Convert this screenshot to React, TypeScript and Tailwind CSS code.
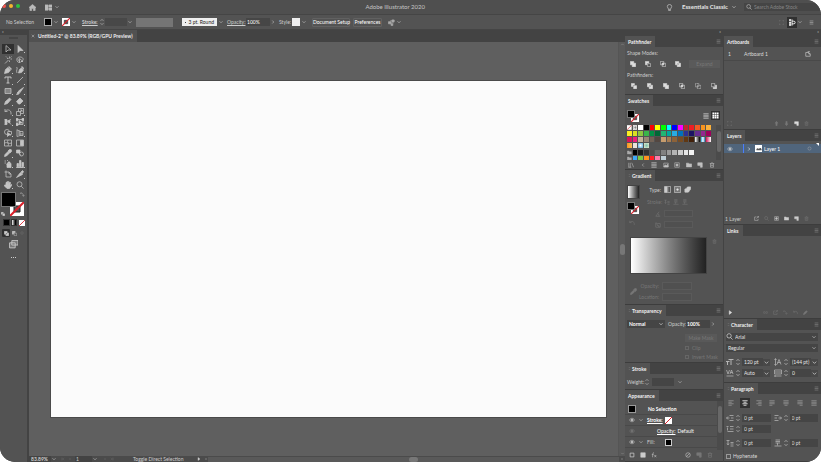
import React from 'react';
import clsx from 'clsx';

const ICONS: Record<string, React.ReactNode> = {
  home: <path fill="currentColor" d="M8 1 0 8h2v7h4v-5h4v5h4V8h2z" />,
  layout: <path fill="currentColor" d="M0 2h7v12H0zM9 2h7v5H9zM9 9h7v5H9z" />,
  down: <path d="m4 6 4 4 4-4" />,
  upchev: <path d="m4 10 4-4 4 4" />,
  right: <path d="m6 4 4 4-4 4" />,
  left: <path d="m10 4-4 4 4 4" />,
  spin: <path d="m4 5 4-4 4 4M4 11l4 4 4-4" />,
  menu: <path d="M2 3h12M2 8h12M2 13h12" />,
  bulb: <path d="M6 12v3h4v-3M6 12C6 10 3 9 3 6a5 5 0 0 1 10 0c0 3-3 4-3 6z" />,
  search: <path d="M10.5 10.500 15 15M12 6.500a5 5 0 1 1-10 0 5 5 0 0 1 10 0z" />,
  close: <path d="m3 3 10 10M13 3 3 13" />,
  select: <path d="M4 1v13l4-4h6z" />,
  direct: <path fill="currentColor" d="M4 1v14l4-4h6z" />,
  wand: <path d="m2 15 7-7M11 1v4M11 9v3M6 5h3M13 6h3M4 1l2 2M13 3l2-2" />,
  lasso: <path d="M6 13C2 12 1 8 2 5c2-4 10-4 12 0 1 3-1 6-4 6M7 5v9l3-3h4zM4 5c0 4 2 5 4 6" />,
  pen: <path fill="currentColor" d="m1 15 2-8 5-4 5 5-4 5zM10 1l5 5-1 1-5-5z" />,
  curve: <><path fill="currentColor" d="m5 14 2-7 4-3 4 4-4 5zM12 1l4 4-1 1-4-4z" /><path d="M1 2c4 2-2 7 1 12" /></>,
  type: <path strokeWidth="2" d="M2 5V2h12v3M8 2v12M5 14h6" />,
  line: <path d="M2 14 14 2" />,
  rect: <path fill="#858585" d="M2 3h12v10H2z" />,
  brush: <path fill="currentColor" d="M15 1 8 11 5 8zM5 9l2 3c-1 3-4 3-6 3 2-1 1-5 4-6z" />,
  pencil: <path fill="currentColor" d="m1 15 2-6 8-7 3 3-7 8z" />,
  eraser: <path fill="currentColor" d="m1 9 7-7 6 6-6 6H5z" />,
  rotate: <path d="M2 2v5h5M2 7c3-5 12-4 12 3v3" />,
  scale: <path d="M1 7h8v8H1zM5 7V1h10v10H9M7 9l5-5M8 4h4v4" />,
  width: <><path d="M1 13C5 12 5 5 14 3M1 3c5 1 8 4 13 10" /><path fill="currentColor" d="M2 3h4v10H2zM9 5h3v4H9z" /></>,
  transform: <><path d="M2 3h12v10H2z" /><path fill="currentColor" d="M0 1h4v4H0zM12 1h4v4h-4zM0 11h4v4H0zM6 5v8l3-3h4z" /></>,
  shape: <><path d="M11 6a5 5 0 1 0-5 5M7 5h8v6" /><path fill="currentColor" d="M7 7v8l3-3h4z" /></>,
  persp: <path d="M2 1v14M2 2l6 2v9l-6 2M8 5h6v8H8M4 6h4M4 10h10" />,
  mesh: <path d="M1 2h14v12H1zM1 8c5-3 9 3 14 0M8 2c-3 5 3 7 0 12" />,
  grad: <><path d="M1 2h14v12H1z" /><path fill="currentColor" d="M9 3h5v10H9z" /></>,
  dropper: <path fill="currentColor" d="m1 15 1-4 6-6 3 3-6 6zM8 4l3-3c3-1 5 1 4 4l-3 3z" />,
  blend: <><path fill="currentColor" d="M1 2h7v6H1z" /><circle cx="11" cy="10" r="4" /><path d="m4 6 6 7" /></>,
  spray: <><path fill="currentColor" d="M6 7h8v8H6zM8 4h4v2H8z" /><path d="M1 2h3M1 6h3M6 1h2M4 9h1" /></>,
  graph: <path fill="currentColor" d="M1 14h14v1H1zM2 7h3v6H2zM7 1h3v12H7zM12 5h3v8h-3z" />,
  artboard: <path d="M4 1v3M1 4h9l4 4v6H4V4M10 4v4h4" />,
  slice: <path fill="currentColor" d="m1 15 8-10 4 4zM10 4l3-3 2 2-2 4z" />,
  hand: <path fill="currentColor" d="M4 8V3l2-1 1 5V1h2v6l2-5 2 1-1 6 3-2 1 1-5 7H6L0 9l1-1z" />,
  swap: <path d="M3 6 1 4l3-3M2 4c6-1 9 3 9 8M8 10l3 4 3-4" />,
  expand: <path d="M5 1H1v4M11 1h4v4M1 11v4h4M15 11v4h-4" />,
  screen: <path fill="#777" d="M5 1h11v8H5zM1 5h10v9H1z" />,
  unite: <path fill="currentColor" d="M1 1h9v5h5v9H6v-5H1z" />,
  minus: <><path fill="currentColor" d="M1 1h9v4H5v5H1z" /><path d="M7 7h8v8H7z" /></>,
  intersect: <><path d="M1 1h9v9H1zM6 6h9v9H6z" /><path fill="currentColor" d="M6 6h4v4H6z" /></>,
  exclude: <path fill="currentColor" fillRule="evenodd" d="M1 1h9v9H1zM6 6h9v9H6z" />,
  divide: <path fill="currentColor" d="M1 1h8v4H5v4H1zM7 7h8v8H7z" />,
  outline: <path strokeDasharray="3 1" d="M1 1h9v9H1zM6 6h9v9H6z" />,
  minusback: <><path d="M1 1h9v9H1z" /><path fill="currentColor" d="M12 6h3v9H6v-3h6z" /></>,
  folder: <path fill="currentColor" d="M1 3h6l1 2h7v8H1z" />,
  page: <path fill="currentColor" d="M2 2h12v12H9V9H2z" />,
  trash: <path d="M2 4h12M4 4v10h8V4M6 2h4M7 7v4M9 7v4" />,
  file: <path d="M2 4h8l4 4v6H2zM10 4v4h4M7 1h6" />,
  share: <path d="M8 3H2v11h11V9M8 8l6-6M10 1h5v5" />,
  library: <path d="M2 2v12M6 2v12M10 2l5 12M1 14h8" />,
  mask: <><path d="M2 2h12v12H2z" /><circle cx="8" cy="8" r="3" fill="currentColor" /></>,
  image: <><path d="M2 3h12v10H2z" /><path fill="currentColor" d="m2 13 4-6 3 3 3-4 2 7z" /></>,
  layer: <path fill="currentColor" stroke="none" d="M1 9c3-6 5 0 7-2s5-3 7 2v2H1z" />,
  eye: <><path d="M1 8c4-6 10-6 14 0-4 6-10 6-14 0z" /><circle cx="8" cy="8" r="2.500" fill="currentColor" /></>,
  up: <path fill="currentColor" d="M8 1 3 7h3v8h4V7h3z" />,
  dn: <path fill="currentColor" d="M8 15 3 9h3V1h4v8h3z" />,
  angle: <path d="M14 14H2L11 2M7 7c3 1 4 4 3 7" />,
  aspect: <path d="M2 2v12h12V4H6zM6 8l6 6M3 4l8 8" />,
  fontsize: <path strokeWidth="2" d="M5 3h10M10 3v11M0 7h7M3 7v7" />,
  leading: <path d="m6 13 4-10 4 10M7 9h6M3 2v12M1 4l2-3 2 3M1 12l2 3 2-3" />,
  kerning: <path d="m1 2 3 8 3-8M8 10l3-8 3 8M9 7h4M1 14h14" />,
  tracking: <path d="M1 2h14v8H1zM4 4v4M8 4v4M12 4v4M1 14h14M3 12l-2 2 2 2" />,
  alignleft: <path strokeWidth="2" d="M1 2h14M1 6h9M1 10h14M1 14h9" />,
  aligncenter: <path strokeWidth="2" d="M1 2h14M4 6h8M1 10h14M4 14h8" />,
  alignright: <path strokeWidth="2" d="M1 2h14M6 6h9M1 10h14M6 14h9" />,
  justify: <path strokeWidth="2" d="M1 2h14M1 6h14M1 10h14M1 14h8" />,
  justifycenter: <path strokeWidth="2" d="M1 2h14M1 6h14M1 10h14M4 14h8" />,
  justifyright: <path strokeWidth="2" d="M1 2h14M1 6h14M1 10h14M7 14h8" />,
  justifyall: <path strokeWidth="2" d="M1 2h14M1 6h14M1 10h14M1 14h14" />,
  indentleft: <path d="M15 3H7M15 8h-5M15 13H7M7 8H1M4 5 1 8l3 3" />,
  indentright: <path d="M1 3h8M1 8h5M1 13h8M9 8h6M12 5l3 3-3 3" />,
  indentfirst: <path d="M1 3h4M8 3h7M8 8h7M3 13h12M3 5v6" />,
  before: <path d="M1 3h6M4 3v8M2 9l2 3 2-3M9 7h6M9 10h6M9 14h6" />,
  after: <path d="M3 2h9M3 5h9M3 8h9M1 14h14M7 8v5" />,
  square: <path strokeWidth="2" d="M3 3h10v10H3z" />,
  squarefill: <path fill="currentColor" d="M2 2h12v12H2z" />,
  fx: <path d="M8 2C4 1 5 6 4 14M2 7h5M9 8l5 6M14 8l-5 6" />,
  ban: <><circle cx="8" cy="8" r="6" /><path d="m4 12 8-8" /></>,
  circle: <circle cx="8" cy="8" r="5" />,
  play: <path fill="currentColor" d="M4 2v12l8-6z" />,
  first: <path d="M4 2v12M12 3 7 8l5 5" />,
  last: <path d="M12 2v12M4 3l5 5-5 5" />,
  link: <path d="M7 5H4a3 3 0 0 0 0 6h3M9 5h3a3 3 0 0 1 0 6H9M5 8h6" />,
  recolor: <><path d="M5 4h10M5 9h8" /><path fill="currentColor" d="M1 6h6v5H1zM9 2h5v5H9zM7 11h4v4H7z" /></>,
  arrange: <><path fill="currentColor" d="M1 1h3v3H1zM1 7h3v3H1zM1 12h3v3H1z" /><path strokeWidth="2" d="M7 1v14M7 5h4a3 3 0 0 1 0 6H7" /></>,
  list: <path strokeWidth="2" d="M1 2h14M1 6h14M1 10h14M1 14h14" />,
  grid: <path fill="currentColor" stroke="none" d="M1 1h4v4H1zM6 1h4v4H6zM11 1h4v4h-4zM1 6h4v4H1zM6 6h4v4H6zM11 6h4v4h-4zM1 11h4v4H1zM6 11h4v4H6zM11 11h4v4h-4z" />,
  gradlinear: <><path d="M1 1h14v14H1z" /><path fill="#ccc" d="M2 2h5v12H2z" /><path fill="#999" stroke="none" d="M7 2h3v12H7z" /></>,
  gradradial: <><path d="M1 1h14v14H1z" fill="#777" /><circle cx="8" cy="8" r="2" fill="#eee" /></>,
  gradfree: <path fill="currentColor" d="M2 7c5 0 4-5 7-5h6v6c-3 0-2 6-6 6H2z" />,
};

const Icon = ({ name, className = 'size-[7px]' }: { name: string; className?: string }) => (
  <svg viewBox="0 0 16 16" fill="none" stroke="currentColor" strokeWidth="1.5" className={clsx('shrink-0', className)} aria-hidden="true">
    {ICONS[name]}
  </svg>
);

interface IconButtonProps {
  name: string;
  label?: string;
  className?: string;
  icon?: string;
}

const IconButton: React.FC<IconButtonProps> = ({ name, label, className, icon }) => (
  <button type="button" aria-label={label ?? name} className={clsx('flex shrink-0 items-center justify-center', className)}>
    <Icon name={name} className={icon} />
  </button>
);

// White square with the red diagonal of an empty stroke
const NoneSwatch = ({ className, hollow }: { className?: string; hollow?: boolean }) => (
  <svg viewBox="0 0 14 14" className={clsx('shrink-0', className)} aria-hidden="true">
    <path fill="#fff" d="M0 0h14v14H0z" />
    {hollow && <path fill="#535353" stroke="#222" d="M4 4h6v6H4z" />}
    <path stroke="#d9202b" strokeWidth="2" d="M0 14 14 0" />
  </svg>
);

interface PanelProps {
  title: string;
  fold?: boolean;
  className?: string;
  children?: React.ReactNode;
}

const Panel: React.FC<PanelProps> = ({ title, fold, className, children }) => (
  <section className={clsx('flex shrink-0 flex-col border-b border-[#3d3d3d] bg-[#535353]', className)}>
    <header className="flex h-[11px] shrink-0 items-stretch justify-between bg-[#434343]">
      <h2 className="flex items-center gap-px bg-[#535353] pr-1 pl-[3px] font-bold text-[#f0f0f0]">
        {fold && <Icon name="spin" className="size-[3px] text-[#999]" />}
        {title}
      </h2>
      <IconButton name="menu" label={`${title} menu`} icon="size-[5px]" className="w-[9px] text-[#999]" />
    </header>
    {children}
  </section>
);

interface FieldProps {
  label: string;
  value?: string;
  icon?: string;
  drop?: boolean;
  className?: string;
}

const Field: React.FC<FieldProps> = ({ label, value = '', icon, drop, className }) => (
  <label className={clsx('flex h-[8px] items-center', className)}>
    {icon && <Icon name={icon} className="size-[8px] text-[#b5b5b5]" />}
    <Icon name="spin" className="mx-px size-[6px]" />
    <input aria-label={label} defaultValue={value} className="h-[8px] w-0 min-w-0 flex-1 bg-[#454545] pl-[2px]" />
    {drop && <Icon name="down" className="size-[7px] bg-[#484848]" />}
  </label>
);

const Select = ({ label, value, className }: { label: string; value: string; className?: string }) => (
  <div className={clsx('relative flex h-[8px] items-center bg-[#454545]', className)}>
    <select aria-label={label} defaultValue={value} className="h-full w-full appearance-none bg-transparent pr-2 pl-[2px]">
      <option>{value}</option>
    </select>
    <Icon name="down" className="pointer-events-none absolute right-px size-[6px]" />
  </div>
);

const TOOLS = [
  'select', 'direct', 'wand', 'lasso', 'pen', 'curve', 'type', 'line', 'rect', 'brush', 'pencil', 'eraser', 'rotate', 'scale',
  'width', 'transform', 'shape', 'persp', 'mesh', 'grad', 'dropper', 'blend', 'spray', 'graph', 'artboard', 'slice', 'hand', 'search',
];
const NO_FLYOUT = ['select', 'wand', 'lasso', 'mesh', 'grad', 'blend', 'artboard', 'search'];

const SWATCHES = [
  '#ffffff', '#000000', '#ff0000', '#ffff00', '#00ff00', '#00ffff', '#0000ff', '#ff00ff', '#c1272d', '#ed1c24', '#f15a24', '#f7931e', '#fbb03b',
  '#fcee21', '#d9e021', '#8cc63f', '#39b54a', '#009245', '#006837', '#22b573', '#00a99d', '#29abe2', '#0071bc', '#2e3192', '#1b1464', '#662d91', '#93278f', '#9e005d',
  '#d4145a', '#ed1e79', '#c7b299', '#998675', '#736357', '#534741', '#c69c6d', '#a67c52', '#8c6239', '#754c24', '#603813', '#42210b',
  'linear-gradient(90deg,#fff,#000)', 'linear-gradient(90deg,#29abe2,#fff,#1b6db5)', 'linear-gradient(90deg,#d4145a,#fff)',
  'linear-gradient(90deg,#f7931e,#fbc05b)', '#e9e4da', 'radial-gradient(#fff,#4aa3d8)', 'radial-gradient(#7fc0b0,#e8eccc)',
];
const GREYS = ['#000', '#1a1a1a', '#333', '#4d4d4d', '#666', '#808080', '#999', '#b3b3b3', '#ccc', '#e6e6e6', '#f2f2f2'];
const BRIGHTS = ['#3fa9f5', '#7ac943', '#ff931e', '#ff1d25', '#ff7bac', '#bdccd4'];

const SwatchRow = ({ colors }: { colors: string[] }) => (
  <div className="grid grid-cols-15 gap-px">
    <Icon name="folder" className="h-[5px] w-full text-[#aaa]" />
    {colors.map((c) => (
      <button key={c} type="button" aria-label={c} className="h-[5px]" style={{ background: c }} />
    ))}
  </div>
);

const TitleBar = () => (
  <header className="grid h-[15px] shrink-0 grid-cols-[12fr_auto_13fr] items-center border-b border-[#454545] bg-[#4f4f4f]">
    <div className="flex items-center">
      <div className="flex gap-[3px] pb-[3px] pl-[2px]">
        <i className="size-[4px] rounded-full bg-[#f4544d]" />
        <i className="size-[4px] rounded-full bg-[#f5b52e]" />
        <i className="size-[4px] rounded-full bg-[#2cc23e]" />
      </div>
      <IconButton name="home" label="Home" className="ml-[9px] text-[#bbb]" />
      <IconButton name="layout" label="Arrange documents" className="ml-[9px] text-[#bbb]" />
      <Icon name="down" className="ml-[2px] size-[6px]" />
    </div>
    <h1 className="text-[6px] leading-[8px] text-[#c5c5c5]">Adobe Illustrator 2020</h1>
    <div className="flex items-center justify-end">
      <IconButton name="bulb" label="Learn" />
      <button type="button" className="ml-[9px] flex items-center gap-[3px] text-[6px] leading-[8px] font-bold text-[#e5e5e5]">
        Essentials Classic
        <Icon name="down" className="size-[6px]" />
      </button>
      <label className="ml-[7px] flex h-[8px] w-[77px] items-center gap-[2px] bg-[#454545] px-[2px]">
        <Icon name="search" className="size-[6px]" />
        <input aria-label="Search Adobe Stock" placeholder="Search Adobe Stock" className="w-0 flex-1 placeholder:text-[#858585]" />
      </label>
    </div>
  </header>
);

const ControlBar = () => (
  <div className="flex h-[15px] shrink-0 items-center border-b border-[#454545] bg-[#535353]">
    <span className="w-[44px] pl-[6px]">No Selection</span>
    <button type="button" aria-label="Fill" className="size-[8px] border border-[#aaa] bg-black" />
    <Icon name="down" className="ml-px size-[6px]" />
    <NoneSwatch hollow className="ml-[3px] size-[8px]" />
    <Icon name="down" className="ml-px size-[6px]" />
    <label htmlFor="stroke-weight" className="ml-[5px] w-[17px] font-bold underline">Stroke:</label>
    <Icon name="spin" className="size-[6px]" />
    <input id="stroke-weight" className="h-[8px] w-[22px] bg-[#484848]" />
    <Icon name="down" className="size-[6px]" />
    <span className="ml-[3px] h-[9px] w-[37px] bg-[#757575]" />
    <button type="button" className="ml-[9px] flex h-[8px] w-[35px] items-center justify-between bg-[#eee] px-[3px] text-[#222]">
      <i className="size-px rounded-full bg-black" />
      3 pt. Round
    </button>
    <Icon name="down" className="ml-px size-[6px]" />
    <label htmlFor="opacity" className="ml-[3px] w-[19px] underline">Opacity:</label>
    <input id="opacity" defaultValue="100%" className="h-[8px] w-[24px] bg-[#464646] px-px text-white" />
    <Icon name="right" className="size-[6px]" />
    <span className="ml-[3px] w-[13px]">Style:</span>
    <button type="button" aria-label="Graphic style" className="size-[8px] bg-[#eee]" />
    <Icon name="down" className="ml-px size-[6px]" />
    <button type="button" className="ml-[5px] h-[9px] w-[38px] rounded-[1px] border border-[#616161] text-white">Document Setup</button>
    <button type="button" className="ml-[3px] h-[9px] w-[29px] rounded-[1px] border border-[#616161] text-white">Preferences</button>
    <IconButton name="recolor" label="Recolor" className="ml-[6px] text-[#aaa]" />
    <Icon name="down" className="ml-px size-[6px]" />
    <div className="ml-auto flex items-center pr-[7px]">
      <Icon name="expand" className="size-[5px] text-[#777]" />
      <IconButton name="arrange" label="Align" className="ml-[3px] h-[11px] w-[10px] bg-[#303030] text-white" />
      <Icon name="down" className="mr-[6px] size-[6px]" />
      <IconButton name="menu" label="Options" icon="size-[5px]" />
    </div>
  </div>
);

const Toolbar = () => (
  <aside className="flex w-[29px] shrink-0 flex-col border-r-2 border-[#434343] bg-[#535353]">
    <div className="h-[5px] bg-[#434343] pl-[2px] text-[4px] leading-[4px]">«</div>
    <div className="mx-auto mt-[2px] mb-[5px] h-[2px] w-[9px] border-y border-[#454545]" />
    <div className="ml-[2px] grid h-[146px] w-[24px] shrink-0 grid-cols-2">
      {TOOLS.map((t, i) => (
        <button key={t} type="button" aria-label={t} className={clsx('relative flex items-center justify-center text-[#c4c4c4]', i === 0 && 'bg-[#303030]')}>
          <Icon name={t} className="size-[8px]" />
          {!NO_FLYOUT.includes(t) && <i className="absolute right-px bottom-px size-px bg-[#c4c4c4]" />}
        </button>
      ))}
    </div>
    <div className="relative mt-[2px] ml-px h-[25px] w-[25px] shrink-0">
      <NoneSwatch hollow className="absolute right-[2px] bottom-px size-[14px]" />
      <button type="button" aria-label="Fill colour" className="absolute top-0 left-0 size-[15px] border border-[#777] bg-black" />
      <IconButton name="swap" label="Swap fill and stroke" icon="size-[5px]" className="absolute top-0 right-px" />
      <Icon name="divide" className="absolute bottom-px left-0 size-[4px]" />
    </div>
    <div className="mt-[2px] ml-[2px] grid w-[24px] grid-cols-3 place-items-center">
      <i className="size-[7px] border border-[#333] bg-black" />
      <i className="h-[7px] w-[6px] border border-[#333] bg-linear-to-r from-white to-black" />
      <NoneSwatch className="size-[6px]" />
    </div>
    <div className="mt-[3px] ml-[2px] grid w-[24px] grid-cols-3 place-items-center">
      <IconButton name="exclude" label="Draw normal" icon="size-[5px]" className="size-[8px] rounded-[1px] bg-[#303030]" />
      <IconButton name="minus" label="Draw behind" icon="size-[5px]" />
      <Icon name="circle" className="size-[4px] text-[#777]" />
    </div>
    <IconButton name="screen" label="Screen mode" icon="size-[9px]" className="mt-[3px]" />
    <button type="button" aria-label="Edit toolbar" className="mt-[8px] flex justify-center gap-px">
      <i className="size-px bg-[#ccc]" />
      <i className="size-px bg-[#ccc]" />
      <i className="size-px bg-[#ccc]" />
    </button>
  </aside>
);

const Workspace = () => (
  <main className="flex min-w-0 flex-1 flex-col bg-[#5f5f5f]">
    <div className="flex h-[12px] shrink-0 bg-[#434343]">
      <div className="flex items-center gap-[3px] bg-[#515151] pr-[4px] pl-[2px] text-[#eee]">
        <IconButton name="close" label="Close document" icon="size-[4px]" />
        <span className="font-bold">Untitled-2* @ 83.89% (RGB/GPU Preview)</span>
      </div>
    </div>
    <div className="flex flex-1">
      <div className="flex flex-1 pt-[39px] pr-[12px] pb-[39px] pl-[22px]">
        <div className="flex-1 bg-[#fbfbfb] shadow-[0_0_0_1px_#4a4a4a]" />
      </div>
      <div className="flex w-[7px] flex-col items-center justify-between border-l border-[#555] bg-[#595959]">
        <Icon name="upchev" className="size-[5px] text-[#999]" />
        <i className="h-[11px] w-[5px] rounded-full bg-[#777]" />
        <Icon name="down" className="size-[5px] text-[#999]" />
      </div>
    </div>
    <footer className="flex h-[6px] shrink-0 items-center bg-[#4b4b4b]">
      <input aria-label="Zoom" defaultValue="83.89%" className="w-[22px] bg-[#434343] pl-[2px] font-bold" />
      <Icon name="down" className="size-[6px]" />
      <Icon name="first" className="ml-[4px] size-[4px] text-[#777]" />
      <Icon name="left" className="ml-[3px] size-[4px] text-[#777]" />
      <input aria-label="Artboard" defaultValue="1" className="ml-[3px] w-[17px] bg-[#434343] px-px" />
      <Icon name="down" className="size-[6px]" />
      <Icon name="right" className="ml-[5px] size-[4px] text-[#777]" />
      <Icon name="last" className="ml-[3px] size-[4px] text-[#777]" />
      <span className="ml-[19px] w-[64px]">Toggle Direct Selection</span>
      <Icon name="play" className="size-[4px]" />
      <Icon name="left" className="ml-[3px] size-[4px]" />
      <div className="flex flex-1 justify-center bg-[#595959]">
        <i className="h-[5px] w-[9px] rounded-full bg-[#777]" />
      </div>
      <Icon name="right" className="mx-px size-[4px]" />
    </footer>
  </main>
);

const FillStroke = () => (
  <div className="relative size-[12px] shrink-0">
    <NoneSwatch hollow className="absolute right-0 bottom-0 size-[8px]" />
    <i className="absolute top-0 left-0 size-[8px] border border-[#777] bg-black" />
  </div>
);

const LeftDock = () => (
  <div className="flex w-[98px] shrink-0 flex-col">
    <div className="h-[6px] shrink-0 bg-[#434343] pr-[2px] text-right text-[4px] leading-[4px]">»</div>
    <Panel title="Pathfinder" className="h-[59px]">
      <div className="px-[2px] pt-[3px]">
        <p>Shape Modes:</p>
        <div className="mt-[3px] flex h-[9px] items-center text-[#ddd]">
          {['unite', 'minus', 'intersect', 'exclude'].map((n) => (
            <IconButton key={n} name={n} className="w-[15px] pr-[3px]" icon="size-[6px]" />
          ))}
          <button type="button" disabled className="ml-[2px] h-[8px] w-[31px] bg-[#5a5a5a] text-[#777]">Expand</button>
        </div>
        <p className="mt-[4px]">Pathfinders:</p>
        <div className="mt-[3px] flex h-[9px] items-center justify-between text-[#ddd]">
          {['divide', 'exclude', 'unite', 'intersect', 'outline', 'minusback'].map((n) => (
            <IconButton key={n} name={n} className="w-[14px]" icon="size-[6px]" />
          ))}
        </div>
      </div>
    </Panel>
    <Panel title="Swatches" className="h-[75px]">
      <div className="flex h-[19px] shrink-0 items-center pr-[3px] pl-[2px]">
        <FillStroke />
        <IconButton name="list" label="List view" icon="size-[6px]" className="ml-auto size-[9px]" />
        <IconButton name="grid" label="Grid view" className="ml-px size-[9px] bg-[#303030] text-white" />
      </div>
      <div className="flex h-[35px] shrink-0 justify-between overflow-hidden pr-[2px] pl-[2px]">
        <div className="flex w-[84px] flex-col gap-px">
          <div className="mb-px grid grid-cols-15 gap-px">
            <NoneSwatch className="h-[5px] w-full" />
            <Icon name="mask" className="h-[5px] w-full bg-white text-[#888]" />
            {SWATCHES.map((c) => (
              <button key={c} type="button" aria-label={c} className="h-[5px]" style={{ background: c }} />
            ))}
          </div>
          <SwatchRow colors={GREYS} />
          <SwatchRow colors={BRIGHTS} />
        </div>
        <div className="flex w-[5px] flex-col items-center bg-[#4b4b4b] pt-[6px]">
          <i className="h-[21px] w-[4px] rounded-[2px] bg-[#686868]" />
        </div>
      </div>
      <div className="flex flex-1 items-center justify-between pr-[8px] pl-[3px] text-[#c0c0c0]">
        {['library', 'left', 'list', 'image', 'mask', 'folder', 'page', 'trash'].map((n) => (
          <IconButton key={n} name={n} icon="size-[6px]" />
        ))}
      </div>
    </Panel>
    <Panel title="Gradient" fold className="h-[135px]">
      <div className="flex gap-[6px] px-[2px] pt-[4px]">
        <div className="flex w-[14px] flex-col gap-[3px]">
          <i className="h-[14px] w-[13px] border border-[#444] bg-linear-to-r from-white to-[#222]" />
          <FillStroke />
          <Icon name="rotate" className="mt-[3px] ml-[2px] size-[6px] text-[#777]" />
        </div>
        <div className="flex flex-col gap-[4px] text-[#777]">
          <div className="flex h-[9px] items-center gap-[3px] text-[#ccc]">
            <span className="w-[14px] text-right">Type:</span>
            {['gradlinear', 'gradradial', 'gradfree'].map((n) => (
              <IconButton key={n} name={n} />
            ))}
          </div>
          <div className="flex h-[8px] items-center gap-[3px]">
            <span className="w-[14px]">Stroke:</span>
            {['before', 'after', 'after'].map((n, i) => (
              <IconButton key={i} name={n} icon="size-[6px]" />
            ))}
          </div>
          {['angle', 'aspect'].map((n) => (
            <div key={n} className="flex h-[7px] items-center gap-[3px]">
              <Icon name={n} className="ml-[8px] size-[6px]" />
              <input aria-label={n} disabled className="h-[7px] w-[29px] border border-[#5a5a5a] bg-[#505050]" />
            </div>
          ))}
        </div>
      </div>
      <div className="mt-[9px] flex items-start gap-[5px] pl-[5px]">
        <div className="h-[37px] w-[77px] border border-[#444] bg-linear-to-r from-white via-[#858585] to-[#222]" />
        <Icon name="trash" className="mt-[2px] size-[5px] text-[#777]" />
      </div>
      <div className="mt-[8px] flex items-center pl-[5px] text-[#777]">
        <Icon name="dropper" />
        <div className="flex flex-1 flex-col gap-[3px]">
          {['Opacity:', 'Location:'].map((l) => (
            <label key={l} className="flex h-[8px] items-center gap-[3px]">
              <span className="w-[22px] text-right">{l}</span>
              <input disabled className="h-[8px] w-[30px] border border-[#5a5a5a] bg-[#505050]" />
            </label>
          ))}
        </div>
      </div>
    </Panel>
    <Panel title="Transparency" fold className="h-[58px]">
      <div className="flex items-center pt-[4px] pl-[2px]">
        <Select label="Blend mode" value="Normal" className="w-[38px] font-bold text-white" />
        <label htmlFor="transparency" className="ml-[3px] w-[18px]">Opacity:</label>
        <input id="transparency" defaultValue="100%" className="h-[8px] w-[24px] bg-[#454545] px-px font-bold text-white" />
        <Icon name="right" className="size-[6px]" />
      </div>
      <div className="mt-[6px] ml-auto flex w-[38px] flex-col gap-[2px] text-[#777]">
        <button type="button" disabled className="h-[8px] w-[32px] bg-[#595959]">Make Mask</button>
        {['Clip', 'Invert Mask'].map((l) => (
          <label key={l} className="flex h-[7px] items-center gap-[3px]">
            <input type="checkbox" disabled className="size-[4px] appearance-none border border-[#666]" />
            {l}
          </label>
        ))}
      </div>
    </Panel>
    <Panel title="Stroke" fold className="h-[27px]">
      <div className="flex flex-1 items-center pl-[2px]">
        <label htmlFor="weight" className="w-[17px]">Weight:</label>
        <Icon name="spin" className="size-[6px]" />
        <input id="weight" className="ml-[2px] h-[8px] w-[22px] bg-[#454545]" />
        <Icon name="down" className="ml-[3px] size-[6px]" />
      </div>
    </Panel>
    <Panel title="Appearance" className="min-h-0 flex-1">
      <div className="flex min-h-0 flex-1 overflow-hidden">
        <div className="flex flex-1 flex-col pt-[3px] *:h-[11px] *:shrink-0">
          <div className="flex items-center border-b border-[#494949] pl-[3px] font-bold text-white">
            <i className="size-[8px] border border-[#999] bg-black" />
            <span className="ml-[12px]">No Selection</span>
          </div>
          <div className="flex items-center border-b border-[#494949] pl-[4px]">
            <Icon name="eye" className="size-[6px]" />
            <Icon name="down" className="ml-[3px] size-[6px]" />
            <a href="#stroke" className="ml-[3px] w-[18px] font-bold text-white underline">Stroke:</a>
            <NoneSwatch className="size-[7px]" />
          </div>
          <div className="flex items-center gap-[2px] border-b border-[#494949] pl-[4px] text-white">
            <Icon name="eye" className="mr-[20px] size-[6px] text-[#777]" />
            <a href="#opacity" className="underline">Opacity:</a>
            Default
          </div>
          <div className="flex items-center border-b border-[#494949] pl-[4px]">
            <Icon name="eye" className="size-[6px]" />
            <Icon name="down" className="ml-[3px] size-[6px]" />
            <a href="#fill" className="ml-[3px] w-[18px]">Fill:</a>
            <i className="size-[7px] border border-[#ccc] bg-black" />
          </div>
        </div>
        <div className="flex w-[6px] flex-col items-center bg-[#4b4b4b] pt-[5px]">
          <i className="h-[27px] w-[4px] rounded-[2px] bg-[#686868]" />
        </div>
      </div>
      <div className="flex h-[11px] shrink-0 items-center gap-[5px] px-[4px] pb-px">
        {['square', 'squarefill', 'fx'].map((n) => (
          <IconButton key={n} name={n} icon="size-[6px]" />
        ))}
        <IconButton name="ban" icon="size-[6px]" className="ml-auto" />
        <IconButton name="page" icon="size-[6px]" className="text-[#777]" />
        <IconButton name="trash" icon="size-[6px]" className="mr-[6px] text-[#777]" />
      </div>
    </Panel>
  </div>
);

const ALIGNS = ['alignleft', 'aligncenter', 'alignright', 'justify', 'justifycenter', 'justifyright', 'justifyall'];

const RightDock = () => (
  <div className="flex w-[97px] shrink-0 flex-col">
    <div className="h-[6px] shrink-0 bg-[#434343] pr-[2px] text-right text-[4px] leading-[4px]">»</div>
    <Panel title="Artboards" className="h-[94px]">
      <div className="mt-px flex h-[13px] items-center border-b border-[#494949] pr-[10px] pl-[4px] text-[#ddd]">
        <span className="w-[16px]">1</span>
        <span className="flex-1">Artboard 1</span>
        <IconButton name="file" label="Artboard options" icon="size-[6px]" />
      </div>
      <div className="mt-auto flex h-[11px] items-center gap-[5px] pr-[12px] pl-[3px] text-[#777]">
        <Icon name="expand" className="mr-auto size-[5px]" />
        <IconButton name="up" icon="size-[5px]" />
        <IconButton name="dn" icon="size-[5px]" />
        <IconButton name="page" icon="size-[5px]" className="text-[#ddd]" />
        <IconButton name="trash" icon="size-[5px]" />
      </div>
    </Panel>
    <Panel title="Layers" className="h-[95px]">
      <div className="relative mt-[3px] flex h-[9px] items-center bg-[#50657c] pr-[9px] pl-[3px] text-white">
        <Icon name="eye" className="size-[6px] text-[#ccc]" />
        <i className="ml-[10px] h-[9px] w-px bg-[#4a7dff]" />
        <Icon name="right" className="ml-[2px] size-[6px]" />
        <i className="ml-[3px] flex size-[7px] items-center justify-center bg-white">
          <Icon name="layer" className="size-[6px] text-[#555]" />
        </i>
        <span className="ml-[2px] flex-1">Layer 1</span>
        <Icon name="circle" className="size-[5px] text-[#aaa]" />
        <svg viewBox="0 0 3 3" className="absolute -top-px right-[2px] size-[3px]" aria-hidden="true">
          <path fill="#fff" d="M0 0h3v3z" />
        </svg>
      </div>
      <div className="mt-auto flex h-[11px] items-center gap-[5px] pr-[12px] pl-px">
        <span className="mr-auto">1 Layer</span>
        {['share', 'search', 'mask', 'folder', 'page', 'trash'].map((n) => (
          <IconButton key={n} name={n} icon="size-[5px]" className={n === 'search' || n === 'trash' ? 'text-[#777]' : ''} />
        ))}
      </div>
    </Panel>
    <Panel title="Links" className="h-[94px]">
      <div className="mt-auto flex h-[11px] items-center gap-[5px] pr-[13px] pl-[4px] text-[#777]">
        <Icon name="play" className="mr-auto size-[5px] text-[#ddd]" />
        {['link', 'share', 'swap', 'rotate', 'pencil'].map((n) => (
          <IconButton key={n} name={n} icon="size-[5px]" />
        ))}
      </div>
    </Panel>
    <Panel title="Character" fold className="h-[64px]">
      <div className="flex flex-col gap-[3px] pt-[3px] pr-[3px] pl-[2px] text-[#e5e5e5]">
        <div className="flex bg-[#454545]">
          <Icon name="search" className="size-[7px]" />
          <Select label="Font family" value="Arial" className="flex-1" />
        </div>
        <Select label="Font style" value="Regular" />
        <div className="mt-[3px] grid grid-cols-2 gap-x-[4px] gap-y-[3px]">
          <Field label="Font size" icon="fontsize" value="120 pt" drop />
          <Field label="Leading" icon="leading" value="(144 pt)" drop />
          <Field label="Kerning" icon="kerning" value="Auto" drop />
          <Field label="Tracking" icon="tracking" value="0" drop />
        </div>
      </div>
    </Panel>
    <Panel title="Paragraph" fold className="min-h-0 flex-1">
      <div className="mt-[4px] flex justify-between px-[2px] text-[#999]">
        {ALIGNS.map((n) => (
          <IconButton key={n} name={n} icon="size-[6px]" className={clsx('size-[10px]', n === 'aligncenter' && 'bg-[#303030] text-white')} />
        ))}
      </div>
      <div className="mt-[6px] grid grid-cols-2 gap-x-[3px] gap-y-[3px] pr-[3px] pl-[2px] text-[#ddd]">
        <Field label="Left indent" icon="indentleft" value="0 pt" />
        <Field label="Right indent" icon="indentright" value="0 pt" />
        <Field label="First-line indent" icon="indentfirst" value="0 pt" />
        <span />
        <Field label="Space before" icon="before" value="0 pt" className="mt-[3px]" />
        <Field label="Space after" icon="after" value="0 pt" className="mt-[3px]" />
      </div>
      <label className="mt-[6px] flex items-center gap-[2px] pl-[2px] text-[#ddd]">
        <input type="checkbox" className="size-[5px] appearance-none border border-[#999]" />
        Hyphenate
      </label>
    </Panel>
  </div>
);

const App: React.FC = () => (
  <div className="h-screen bg-white">
    <div className="flex h-full flex-col overflow-hidden rounded-[15px] bg-[#434343] font-['Lato',sans-serif] text-[5px] leading-[6px] whitespace-nowrap text-[#ccc]">
      <TitleBar />
      <ControlBar />
      <div className="flex min-h-0 flex-1">
        <Toolbar />
        <Workspace />
        <div className="flex shrink-0 gap-px">
          <LeftDock />
          <RightDock />
        </div>
      </div>
    </div>
  </div>
);

export default App;
